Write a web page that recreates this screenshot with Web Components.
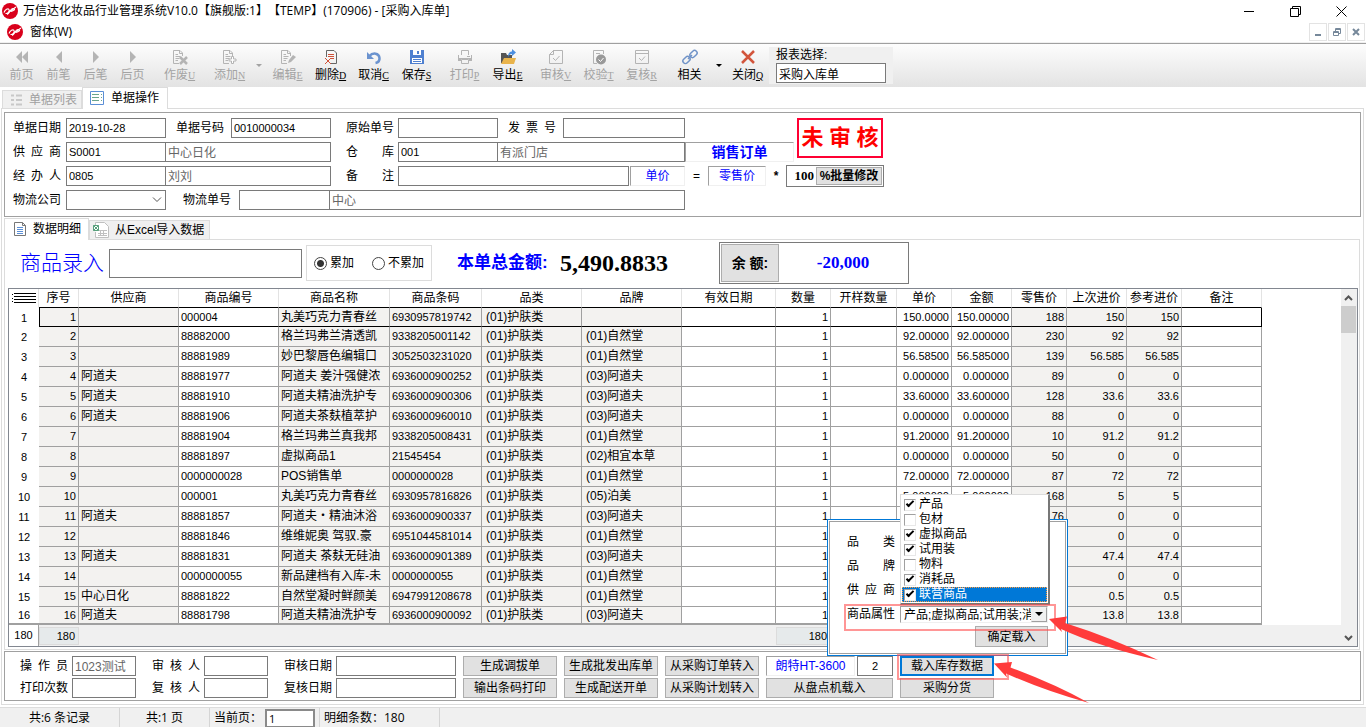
<!DOCTYPE html>
<html lang="zh-CN">
<head>
<meta charset="utf-8">
<title>万信达化妆品行业管理系统V10.0</title>
<style>
html { background: #fff; }
body { margin: 0; font: 12px/16px "Liberation Sans", "Noto Sans CJK SC", sans-serif; color: #000; text-spacing-trim: space-all; }
</style>
</head>
<body>
<app-window>
  <title-bar slot="chrome"></title-bar>
  <menu-bar slot="chrome"></menu-bar>
  <tool-bar slot="chrome"></tool-bar>
  <tab-strip slot="chrome"></tab-strip>
  <order-form></order-form>
  <detail-panel>
    <entry-bar></entry-bar>
    <data-grid></data-grid>
  </detail-panel>
  <action-panel></action-panel>
  <status-bar slot="status"></status-bar>
  <load-dialog slot="overlay"></load-dialog>
  <pointer-marks slot="overlay"></pointer-marks>
</app-window>

<script>
const BASE = `
  *, *::before, *::after { box-sizing: border-box; }
  :host { display: block; box-sizing: border-box; }
  input, button, select { font: inherit; color: inherit; margin: 0; border-radius: 0; min-width: 0; }
  button { cursor: default; padding: 0; white-space: nowrap; }
  label, span { white-space: nowrap; }
  .box { border: 1px solid #7a7a7a; background: #fff; height: 20px; padding: 0 2px; font-size: 11px; outline: 0; }
  .push { border: 1px solid #adadad; background: #e1e1e1; }
  .sunk { border: 1px solid; border-color: #a0a0a0 #f0f0f0 #f0f0f0 #a0a0a0; height: 20px; display: flex; align-items: center; justify-content: center; color: #00f; }
  .lab { width: 48px; text-align: justify; text-align-last: justify; flex: none; }
`;
function define(name, html) {
  customElements.define(name, class extends HTMLElement {
    constructor() {
      super();
      this.attachShadow({ mode: 'open' });
    }
    connectedCallback() {
      const source = typeof html === 'function' ? html(this) : html;
      const t = document.createElement('template');
      t.innerHTML = `<style>${BASE}</style>${source}`;
      this.shadowRoot.replaceChildren(t.content.cloneNode(true));
    }
  });
}

define('app-window', `
  <style>
    :host { position: relative; }
    main { margin: 0 2px 2px 1px; border: 1px solid #dcdcdc; padding: 3px 2px; background: #fff; }
  </style>
  <slot name="chrome"></slot>
  <main><slot></slot></main>
  <slot name="status"></slot>
  <slot name="overlay"></slot>
`);

define('brand-logo', `
  <style>:host { width: 16px; height: 16px; flex: none; } svg { display: block; }</style>
  <svg width="16" height="16" viewBox="0 0 16 16"><circle cx="8" cy="8" r="8" fill="#d9001b"/>
    <g fill="none" stroke="#fff" stroke-width="1.100"><path d="M2 9.500C3 6.500 6 5 7 6.500S5.500 11 3.500 10.500M5 11.500C7.500 11 8.500 5 11 5.500S12 8 9 8.500L13 6.500"/><path d="M7 9 14 4"/></g></svg>
`);

define('title-bar', `
  <style>
    :host { display: flex; align-items: center; height: 22px; padding: 0 2px; background: #fff; font-family: "Open Sans", "Noto Sans CJK SC", sans-serif; }
    span { margin-left: 5px; flex: 1; }
    button { width: 46px; height: 22px; border: 0; background: none; display: grid; place-items: center; }
    svg { fill: none; stroke: #000; }
  </style>
  <brand-logo></brand-logo>
  <span>万信达化妆品行业管理系统V10.0【旗舰版:1】【TEMP】(170906) - [采购入库单]</span>
  <button aria-label="最小化"><svg width="11" height="11"><path d="M0 5.500H10"/></svg></button>
  <button aria-label="还原"><svg width="11" height="11"><path d="M.5 2.500H8.500V10.500H.5ZM2.500 2.500V.5H10.500V8.500H8.500"/></svg></button>
  <button aria-label="关闭"><svg width="11" height="11"><path d="M.5.5 10.500 10.500M10.500.5.5 10.500"/></svg></button>
`);

define('menu-bar', `
  <style>
    :host { display: flex; align-items: center; height: 21px; padding: 0 1px 0 7px; background: #fff; border-bottom: 1px solid #f0f0f0; font-family: "Open Sans", "Noto Sans CJK SC", sans-serif; }
    a { margin: 0 auto 0 7px; color: inherit; text-decoration: none; }
    button { width: 18px; height: 18px; margin-left: 1px; border: 1px solid #e3e3e3; background: #fff; display: grid; place-items: center; }
    svg { fill: none; stroke: #76889a; stroke-width: 2; }
  </style>
  <brand-logo></brand-logo>
  <a href="#">窗体(W)</a>
  <button aria-label="最小化子窗体"><svg width="10" height="10"><path d="M2 8H8"/></svg></button>
  <button aria-label="还原子窗体"><svg width="10" height="10"><path stroke-width="1" d="M1.500 4.500H6.500V8.500H1.500ZM3.500 4V1.500H8.500V6.500H7M1 5.500H7M3 2.500H9"/></svg></button>
  <button aria-label="关闭子窗体"><svg width="10" height="10"><path d="M2 2 8 8M8 2 2 8"/></svg></button>
`);

const G = '#b4b4b4';
const sheet = c => `<path fill="none" stroke="${c}" d="M10.500 7V4L8 1.500H1.500V14.500H7M7.500 1.500V4.500H10.500M3.500 5.500H6M3.500 7.500H8.500M3.500 9.500H7.500M3.500 11.500H6"/>`;
const ICONS = {
  first: `<path fill="${G}" d="M8 2V14L2 8ZM14 2V14L8 8Z"/>`,
  prev: `<path fill="${G}" d="M11 2V14L5 8Z"/>`,
  next: `<path fill="${G}" d="M5 2V14L11 8Z"/>`,
  last: `<path fill="${G}" d="M5 2V14L11 8Z"/>`,
  voided: sheet(G) + `<path stroke="${G}" stroke-width="2.500" d="M8 8 15 15M15 8 8 15"/>`,
  add: sheet(G) + `<path fill="#fff" stroke="${G}" d="M9.500 7.500h2v2.500h2.500v2h-2.500v2.500h-2v-2.500h-2.500v-2h2.500Z"/>`,
  edit: sheet(G) + `<path fill="${G}" d="M13 6 16 8 11 13 8 14 9 11Z"/>`,
  del: `<path fill="none" stroke="#666" d="M3.500 8V1.500H11L13.500 4V14.500H8"/><path stroke="#d0533a" fill="none" d="M5 5.500H11M5 7.500H11M8 9.500H11M2 9 8 15M8 9 2 15"/>`,
  undo: `<path fill="none" stroke="#6b93cf" stroke-width="2.500" d="M3 7.500C7 3 13 4 13.500 9C13.700 11.500 12 13.500 9.500 14"/><path fill="#6b93cf" d="M1 3V10H8Z"/>`,
  save: `<path fill="#4f80d0" d="M1 1H15V15H1Z"/><path fill="#fff" d="M4 1H12V6H4ZM3 9H13V14H3Z"/><path fill="#4f80d0" d="M8 2H10V5H8ZM4 10H12V11H4ZM4 12H12V13H4Z"/>`,
  print: `<path fill="none" stroke="${G}" d="M4.500 6V1.500H11.500V6M4.500 10.500H11.500V14.500H4.500Z"/><path fill="${G}" d="M1 6H2V9H14V6H15V12H12V10H4V12H1ZM10 7V8H13V7Z"/>`,
  out: `<path fill="#555" d="M1 4H6L7 6H12V10L3 14H1Z"/><path fill="#e9b44c" d="M4 9H16L14 15H1Z"/><path fill="#4c8fe0" d="M8 8C8 4 10 2.500 12 2.500V0L16 3.500 12 7V5C10 5 9 6 8 8Z"/>`,
  audit: `<path fill="none" stroke="${G}" d="M5 1.500H14.500V14.500H1.500V5.500H5.500V1.500L1.500 5.500M5 9 7.500 11.500 11.500 7"/>`,
  verify: `<path fill="none" stroke="${G}" d="M12.500 5V1.500H2.500V14.500H6M5 4.500H9"/><circle cx="10" cy="10.500" r="5" fill="#999"/><path fill="none" stroke="#fff" d="M7.500 10.500 9.500 12.500 12.500 9"/>`,
  review: `<path fill="none" stroke="${G}" d="M1.500 1.500H14.500V14.500H1.500ZM1.500 4.500H14.500M5 9 7.500 11.500 11 7.500"/>`,
  link: `<g fill="none" stroke="#7093c8" stroke-width="1.500"><rect x="7.500" y="2.500" width="8" height="5" rx="2.500" transform="rotate(-45 11.500 5)"/><rect x=".5" y="8.500" width="8" height="5" rx="2.500" transform="rotate(-45 4.500 11)"/><path d="M6 10 10 6"/></g>`,
  close: `<path stroke="#d2553c" stroke-width="2.500" d="M2 2 14 14M14 2 2 14"/>`
};
define('tool-button', el => `
  <style>
    :host { width: ${el.hasAttribute('narrow') ? 37 : 43}px; flex: none; }
    :host([gap]) { margin-left: 5px; }
    :host([gap="wide"]) { margin-left: 7px; }
    button { display: flex; flex-direction: column; align-items: center; gap: 2px; width: 100%; border: 0; background: none; padding: 5px 0 0; }
    button:disabled { color: #a3a3a3; }
    svg { width: 16px; height: 16px; }
    u { font: 10px/16px "Liberation Serif", serif; }
  </style>
  <button ${el.hasAttribute('off') ? 'disabled' : ''}>
    <svg viewBox="0 0 16 16">${ICONS[el.getAttribute('icon')]}</svg>
    <span><slot></slot>${el.hasAttribute('key') ? `<u>${el.getAttribute('key')}</u>` : ''}</span>
  </button>
`);

define('tool-bar', `
  <style>
    :host { display: flex; height: 44px; border-top: 1px solid #a0a0a0; padding-left: 3px; background: linear-gradient(#fdfdfd, #e3e3e3); }
    i { width: 15px; flex: none; display: grid; place-items: center; }
    i::before { content: ""; border: 3px solid transparent; border-top-color: currentColor; border-bottom: 0; }
    .off { color: #a3a3a3; }
    .report { width: 124px; height: 37px; margin-top: 3px; padding-left: 7px; background: #f0f0f0; display: flex; flex-direction: column; }
    .report .box { width: 110px; font-size: 12px; }
  </style>
  <tool-button narrow off icon="first">前页</tool-button>
  <tool-button narrow off icon="prev">前笔</tool-button>
  <tool-button narrow off icon="next">后笔</tool-button>
  <tool-button narrow off icon="last">后页</tool-button>
  <tool-button gap="wide" off icon="voided" key="U">作废</tool-button>
  <tool-button gap="wide" off icon="add" key="N">添加</tool-button>
  <i class="off"></i>
  <tool-button off icon="edit" key="E">编辑</tool-button>
  <tool-button icon="del" key="D">删除</tool-button>
  <tool-button icon="undo" key="C">取消</tool-button>
  <tool-button icon="save" key="S">保存</tool-button>
  <tool-button gap off icon="print" key="P">打印</tool-button>
  <tool-button icon="out" key="E">导出</tool-button>
  <tool-button gap off icon="audit" key="V">审核</tool-button>
  <tool-button off icon="verify" key="T">校验</tool-button>
  <tool-button off icon="review" key="R">复核</tool-button>
  <tool-button gap icon="link">相关</tool-button>
  <i></i>
  <tool-button icon="close" key="Q">关闭</tool-button>
  <label class="report">报表选择:<input class="box" value="采购入库单"></label>
`);

define('tab-strip', `
  <style>
    :host { display: flex; align-items: flex-end; height: 21px; padding-left: 2px; background: #fff; }
    button { display: flex; align-items: center; border: 1px solid #dcdcdc; border-bottom: 0; background: #f0f0f0; height: 18px; width: 80px; padding-left: 7px; gap: 5px; color: #a0a0a0; }
    .on { position: relative; height: 22px; margin-bottom: -1px; width: 86px; background: #fff; color: #000; gap: 7px; padding-bottom: 2px; }
    svg { flex: none; }
  </style>
  <button role="tab"><svg width="14" height="12"><path stroke="#c8c8c8" stroke-width="2" d="M1 1.500H4M6 1.500H12M1 6H4M6 6H12M1 10.500H4M6 10.500H12"/></svg>单据列表</button>
  <button role="tab" class="on" aria-selected="true"><svg width="14" height="14"><path fill="#fff" stroke="#5b8fd6" d="M.5.5H13.500V13.500H.5Z"/><path stroke="#6aa58c" d="M2 3.500H9M2 6.500H9M2 9.500H9M11 3.500H12M11 6.500H12M11 9.500H12"/></svg>单据操作</button>
`);

define('form-field', el => {
  const a = n => el.getAttribute(n) || '';
  return `
  <style>
    :host { display: flex; align-items: center; flex: none; }
    label { margin-right: var(--label-gap, 4px); }
    .one { width: ${a('w')}px; }
    .two { width: ${+a('w2') + 1}px; margin-left: -1px; color: #666; }
    .two, .gray { color: #666; font-size: 12px; line-height: 16px; padding-bottom: 2px; }
  </style>
  <label class="lab" for="f">${a('label')}</label>
  <input id="f" class="box one ${el.hasAttribute('gray') ? 'gray' : ''}" value="${a('value')}">
  ${el.hasAttribute('w2') ? `<input class="box two" readonly aria-label="${a('label')}名称" value="${a('value2')}">` : ''}`;
});

define('order-form', `
  <style>
    :host { border: 1px solid #a0a0a0; padding: 5px 8px 6px; }
    form { display: flex; flex-direction: column; gap: 4px; }
    .row { display: flex; height: 20px; align-items: center; }
    form-field:first-child { --label-gap: 5px; }
    .g10 { margin-left: 10px; --label-gap: 7px; }
    .g15 { margin-left: 15px; }
    .g17 { margin-left: 17px; --label-gap: 8px; }
    .stamp { margin-left: 112px; width: 86px; height: 40px; align-self: flex-start; border: 2px solid #ff0033; color: #f00; font: 700 22px/36px "Liberation Serif", "Noto Sans CJK SC", serif; text-align: center; }
    .order { width: 109px; font-size: 14px; font-weight: 700; }
    .price { width: 55px; margin-left: 1px; }
    .retail { width: 58px; }
    .op { text-align: center; width: 23px; }
    .mul { width: 20px; font-weight: 700; }
    .combo { width: 100px; display: block; position: relative; margin-left: 5px; height: 20px; }
    .combo select { appearance: none; width: 100%; }
    .combo svg { position: absolute; right: 4px; top: 7px; fill: none; stroke: #555; pointer-events: none; }
    .batch { display: flex; border: 1px solid #7a7a7a; width: 98px; height: 22px; padding: 1px; flex: none; }
    .batch input { border: 0; width: 28px; padding: 0 2px 0 0; text-align: right; font-weight: 700; font-family: "Liberation Serif", serif; font-size: 13px; outline: 0; }
    .batch button { flex: 1; font-weight: 700; }
  </style>
  <form onsubmit="return false">
    <div class="row">
      <form-field label="单据日期" w="100" value="2019-10-28"></form-field>
      <form-field class="g10" label="单据号码" w="100" value="0010000034"></form-field>
      <form-field class="g15" label="原始单号" w="100"></form-field>
      <form-field class="g10" label="发 票 号" w="122"></form-field>
      <span class="stamp">未 审 核</span>
    </div>
    <div class="row">
      <form-field label="供 应 商" w="100" value="S0001" w2="165" value2="中心日化"></form-field>
      <form-field class="g15" label="仓 库" w="100" value="001" w2="187" value2="有派门店"></form-field>
      <span class="sunk order">销售订单</span>
    </div>
    <div class="row">
      <form-field label="经 办 人" w="100" value="0805" w2="165" value2="刘刘"></form-field>
      <form-field class="g15" label="备 注" w="231"></form-field>
      <span class="sunk price">单价</span><span class="op">=</span>
      <span class="sunk retail">零售价</span><span class="op mul">*</span>
      <div class="batch"><input aria-label="百分比" value="100"><button class="push">%批量修改</button></div>
    </div>
    <div class="row">
      <label class="lab" for="carrier">物流公司</label>
      <span class="combo"><select id="carrier" class="box"><option></option></select><svg width="10" height="6"><path d="M1 .5 5 4.500 9 .5"/></svg></span>
      <form-field class="g17" label="物流单号" w="91" w2="355" value2="中心"></form-field>
    </div>
  </form>
`);

define('detail-panel', `
  <style>
    :host { margin-right: 1px; }
    nav { display: flex; align-items: flex-end; height: 22px; }
    button { display: flex; align-items: center; border: 1px solid #dcdcdc; border-bottom: 0; background: #f0f0f0; height: 19px; width: 121px; padding-left: 3px; gap: 6px; }
    .on { position: relative; height: 22px; margin-bottom: -1px; width: 85px; background: #fff; padding: 0 0 2px 9px; gap: 6px; }
    svg { flex: none; fill: none; }
    section { border: 1px solid #dcdcdc; padding: 0 1px 2px 3px; margin-bottom: 1px; }
  </style>
  <nav>
    <button role="tab" class="on" aria-selected="true"><svg width="13" height="14"><path stroke="#777" d="M.5.5H8.500L11.500 3.500V13.500H.5ZM8.500.5V3.500H11.500"/><path stroke="#5b8fd6" d="M3 5.500H9M3 7.500H9M3 9.500H9M3 11.500H9"/></svg>数据明细</button>
    <button role="tab"><svg width="16" height="16"><path fill="#fff" stroke="#c0c0c0" d="M2.500 6V.5H11.500L15.500 4.500V15.500H2.500V10"/><path stroke="#c0c0c0" d="M5 8.500H14M5 11.500H14M5 13.500H14M7.500 8V14M10.500 8V14"/><path fill="#fff" stroke="#58a07c" d="M.5 3.500H5.500V8.500H.5ZM.5 3.500 5.500 8.500M5.500 3.500.5 8.500"/></svg>从Excel导入数据</button>
  </nav>
  <section><slot></slot></section>
`);

define('entry-bar', `
  <style>
    :host { display: flex; align-items: center; height: 48px; padding: 0 0 2px 12px; }
    .cap { font-size: 21px; line-height: 24px; color: #00f; width: 89px; font-weight: 300; }
    .entry { width: 193px; height: 29px; font-size: 14px; }
    fieldset { margin: 0 0 0 4px; border: 1px solid #dcdcdc; width: 126px; height: 36px; padding: 0 0 0 7px; display: flex; align-items: center; gap: 18px; }
    fieldset label { display: flex; align-items: center; gap: 3px; }
    input[type=radio] { appearance: none; width: 13px; height: 13px; border: 1px solid #444; border-radius: 50%; background: #fff; }
    input[type=radio]:checked { background: radial-gradient(#333 0 3px, #fff 4px); }
    .total { margin-left: 25px; width: 103px; color: #00f; font-size: 17px; font-weight: 700; }
    .sum { width: 159px; font: 700 24px/24px "Liberation Serif", serif; }
    .balance { display: flex; align-items: center; border: 1px solid #7a7a7a; padding: 1px; width: 190px; height: 42px; }
    .balance button { width: 58px; height: 38px; font-size: 14px; font-weight: 700; }
    .balance output { flex: 1; text-align: center; color: #00f; font: 700 17px/20px "Liberation Serif", serif; }
  </style>
  <label class="cap" for="entry">商品录入</label><input id="entry" class="box entry">
  <fieldset>
    <label><input type="radio" name="mode" checked>累加</label>
    <label><input type="radio" name="mode">不累加</label>
  </fieldset>
  <span class="total">本单总金额:</span><span class="sum">5,490.8833</span>
  <div class="balance"><button class="push">余 额:</button><output>-20,000</output></div>
`);

const COLUMNS = [
  ['序号', 40, 'g n'], ['供应商', 100, 'g'], ['商品编号', 100, 'd'], ['商品名称', 111, 'g'], ['商品条码', 92, 'g d'],
  ['品类', 100, 'g t'], ['品牌', 100, 'g t'], ['有效日期', 94, ''], ['数量', 55, 'n'], ['开样数量', 66, ''], ['单价', 55, 'n'],
  ['金额', 60, 'n'], ['零售价', 55, 'g n'], ['上次进价', 60, 'g n'], ['参考进价', 55, 'g n'], ['备注', 80, '']
];
const RECORDS = `|000004|丸美巧克力青春丝|6930957819742||150.0000|150.00000|188|150|150
|88882000|格兰玛弗兰清透凯|9338205001142|(01)自然堂|92.00000|92.000000|230|92|92
|88881989|妙巴黎唇色编辑口|3052503231020|(01)自然堂|56.58500|56.585000|139|56.585|56.585
阿道夫|88881977|阿道夫 姜汁强健浓|6936000900252|(03)阿道夫|0.000000|0.000000|89|0|0
阿道夫|88881910|阿道夫精油洗护专|6936000900306|(03)阿道夫|33.60000|33.600000|128|33.6|33.6
阿道夫|88881906|阿道夫茶麸植萃护|6936000960010|(03)阿道夫|0.000000|0.000000|88|0|0
|88881904|格兰玛弗兰真我邦|9338205008431|(01)自然堂|91.20000|91.200000|10|91.2|91.2
|88881897|虚拟商品1|21545454|(02)相宜本草|0.000000|0.000000|50|0|0
|0000000028|POS销售单|0000000028|(01)自然堂|72.00000|72.000000|87|72|72
|000001|丸美巧克力青春丝|6930957816826|(05)泊美|5.000000|5.000000|168|5|5
阿道夫|88881857|阿道夫・精油沐浴|6936000900337|(03)阿道夫|||76|0|0
|88881846|维维妮奥 驾驭.豪|6951044581014|(01)自然堂||||0|0
阿道夫|88881831|阿道夫 茶麸无硅油|6936000901389|(03)阿道夫||||47.4|47.4
|0000000055|新品建档有入库-未|0000000055|(01)自然堂||||0|0
中心日化|88881822|自然堂凝时鲜颜美|6947991208678|(01)自然堂||||0.5|0.5
阿道夫|88881798|阿道夫精油洗护专|6936000900092|(03)阿道夫||||13.8|13.8`.split('\n').map(l => l.split('|'));

define('data-grid', () => {
  const rows = RECORDS.map((r, i) => {
    const [sup, code, name, bar, brand, price, amount, retail, last, ref] = r;
    const cells = [i + 1, sup, code, name, bar, '(01)护肤类', brand, '', 1, '', price, amount, retail, last, ref, ''];
    return `<tr><th scope="row">${i + 1}</th>${cells.map((c, k) => `<td class="${COLUMNS[k][2]}">${c}</td>`).join('')}<td class="fill"></td></tr>`;
  }).join('');
  return `
  <style>
    :host { display: flex; border: 1px solid #828790; background: #fff; }
    .view { flex: 1; min-width: 0; overflow: hidden; }
    table { table-layout: fixed; width: 100%; min-width: 1253px; border-collapse: separate; border-spacing: 0; line-height: 16px; }
    th, td { padding: 0; font-weight: 400; white-space: nowrap; overflow: hidden; border: 0 solid #a0a0a0; height: 20px; }
    thead th { height: 19px; text-align: center; border-width: 0 1px 1px 0; border-color: #e3e3e3; border-bottom-color: #000; }
    thead th:first-child { border-bottom-color: #fff; }
    thead th.fill { border-color: #fff; }
    thead svg { display: block; margin: 0 auto; }
    tbody th { font-size: 11px; text-align: center; }
    td { border-width: 0 1px 1px 0; padding: 0 2px 1px; }
    .g { background: #f3f2f0; }
    .t { padding-left: 4px; }
    .n, .d { font-size: 11px; }
    .n { text-align: right; }
    tbody tr:first-child > * { height: 19px; }
    tbody tr:first-child td { border-bottom-color: #000; }
    tbody tr:first-child td:nth-child(17) { border-right-color: #000; }
    tbody tr:first-child td:nth-child(2) { border-left: 1px solid #000; }
    tbody tr:last-child > * { height: 18px; line-height: 15px; border-bottom: 2px solid #a0a0a0; padding-bottom: 0; }
    tbody tr td.fill { border-width: 0; }
    tfoot td, tfoot th { height: 21px; border: 0; background: #f0f0f0; font-size: 11px; }
    tfoot th { background: #fff; border-right: 1px solid #a0a0a0; padding-bottom: 2px; }
    tfoot span { display: block; height: 18px; padding-right: 3px; border: 1px solid #dcdcdc; background: #e6eaeb; text-align: right; }
    tfoot td { padding: 1px 0; }
    .bar { width: 16px; padding-right: 1px; display: flex; flex-direction: column; align-items: center; background: #f0f0f0; }
    .bar i { width: 15px; height: 27px; background: #cdcdcd; margin-bottom: auto; }
    .bar svg { fill: none; stroke: #555; stroke-width: 2; flex: none; margin: 6px 0 5px; }
  </style>
  <div class="view"><table>
    <colgroup><col style="width:30px">${COLUMNS.map(c => `<col style="width:${c[1]}px">`).join('')}<col></colgroup>
    <thead><tr><th aria-label="行"><svg width="24" height="10"><path stroke="#000" d="M2 .5H24M2 3.500H24M2 6.500H24M2 9.500H24M0 1.500H1M0 5.500H1M0 8.500H1"/></svg></th>${COLUMNS.map(c => `<th scope="col">${c[0]}</th>`).join('')}<th class="fill"></th></tr></thead>
    <tbody>${rows}</tbody>
    <tfoot><tr><th>180</th>${COLUMNS.map((c, k) => `<td>${k === 0 || k === 8 ? '<span>180</span>' : ''}</td>`).join('')}<td class="fill"></td></tr></tfoot>
  </table></div>
  <div class="bar"><svg width="9" height="6"><path d="M1 5 4.500 1.500 8 5"/></svg><i></i><svg width="9" height="6"><path d="M1 1 4.500 4.500 8 1"/></svg></div>`;
});

define('action-panel', `
  <style>
    :host { display: flex; border: 1px solid #a0a0a0; padding: 4px 15px 2px; gap: 7px; }
    .col { display: grid; grid-template-rows: 20px 20px; gap: 2px; flex: none; }
    .fields { margin-right: 9px; }
    .fields.end { margin-right: 0; }
    .push { width: 94px; }
    .wide { width: 127px; }
    .pair { display: flex; gap: 2px; }
    .model { width: 89px; }
    .qty { width: 36px; text-align: center; }
    .focus { border: 2px solid #0078d7; }
  </style>
  <div class="col fields"><form-field label="操 作 员" w="64" gray value="1023测试"></form-field><form-field label="打印次数" w="64"></form-field></div>
  <div class="col fields"><form-field label="审 核 人" w="64"></form-field><form-field label="复 核 人" w="64"></form-field></div>
  <div class="col fields end"><form-field label="审核日期" w="120"></form-field><form-field label="复核日期" w="120"></form-field></div>
  <div class="col"><button class="push">生成调拔单</button><button class="push">输出条码打印</button></div>
  <div class="col"><button class="push">生成批发出库单</button><button class="push">生成配送开单</button></div>
  <div class="col"><button class="push">从采购订单转入</button><button class="push">从采购计划转入</button></div>
  <div class="col"><div class="pair"><span class="sunk model">朗特HT-3600</span><input class="box qty" aria-label="端口" value="2"></div><button class="push wide">从盘点机载入</button></div>
  <div class="col"><button class="push focus">载入库存数据</button><button class="push">采购分货</button></div>
`);

define('status-bar', `
  <style>
    :host { display: flex; align-items: stretch; height: 21px; background: #f0f0f0; border-top: 1px solid #dcdcdc; font-family: "Open Sans", "Noto Sans CJK SC", sans-serif; line-height: 20px; }
    div { border-right: 1px solid #d5d5d5; flex: none; white-space: nowrap; }
    .a { width: 120px; text-align: center; }
    .b { width: 90px; text-align: center; }
    .c { width: 110px; padding-left: 4px; }
    .c label { display: flex; }
    .c input { margin: 1px 4px 0 auto; width: 50px; height: 19px; border: 2px solid #8a8a8a; }
    .d { width: 120px; padding-left: 4px; }
  </style>
  <div class="a">共:6 条记录</div><div class="b">共:1 页</div>
  <div class="c"><label>当前页：<input class="box" value="1"></label></div>
  <div class="d">明细条数：180</div>
`);

define('load-dialog', `
  <style>
    :host { position: absolute; left: 827px; top: 519px; width: 241px; border: 1px solid #0078d7; padding: 1px; background: #fff; }
    .in { border: 1px solid #a0a0a0; padding: 8px 17px 6px; display: flex; flex-direction: column; }
    .row { display: flex; align-items: center; height: 24px; }
    .combo { display: flex; margin-left: 5px; width: 148px; height: 17px; border: 1px solid; border-color: #a0a0a0 #f0f0f0 #f0f0f0 #a0a0a0; }
    select { appearance: none; flex: 1; border: 0; background: #fff; padding: 0 0 0 3px; outline: 0; }
    .drop { width: 16px; border: 1px solid; border-color: #f0f0f0 #a0a0a0 #a0a0a0 #f0f0f0; background: #f0f0f0; display: grid; place-items: center; }
    .drop::before { content: ""; border: 4px solid transparent; border-top-color: #000; border-bottom: 0; }
    .push { align-self: flex-end; width: 73px; height: 21px; }
    ul { position: absolute; left: 72px; top: -26px; width: 150px; margin: 0; padding: 2px 1px 1px; list-style: none; background: #fff; border: 1px solid #dcdcdc; border-right: 2px solid #777; border-bottom: 2px solid #777; }
    li label { display: flex; align-items: center; height: 15px; gap: 3px; padding-left: 1px; line-height: 15px; border: 1px solid transparent; }
    .hot { background: #0078d7; color: #fff; border: 1px dotted #ff9a3c; }
    li input { appearance: none; width: 12px; height: 12px; background: #fff; border: 1px solid; border-color: #a0a0a0 #e8e8e8 #e8e8e8 #a0a0a0; display: grid; place-items: center; flex: none; }
    li input:checked::before { content: ""; width: 8px; height: 4px; border: solid #000; border-width: 0 0 2px 2px; transform: rotate(-45deg); margin-top: -3px; }
  </style>
  <div class="in">
    <div class="row"><span class="lab">品 类</span></div>
    <div class="row"><span class="lab">品 牌</span></div>
    <div class="row"><span class="lab">供 应 商</span></div>
    <div class="row"><label class="lab" for="kind">商品属性</label>
      <div class="combo"><select id="kind"><option>产品;虚拟商品;试用装;消耗品;联营商品</option></select><button class="drop" aria-label="展开"></button></div></div>
    <button class="push">确定载入</button>
  </div>
  <ul>
    <li><label><input type="checkbox" checked>产品</label></li>
    <li><label><input type="checkbox">包材</label></li>
    <li><label><input type="checkbox" checked>虚拟商品</label></li>
    <li><label><input type="checkbox" checked>试用装</label></li>
    <li><label><input type="checkbox">物料</label></li>
    <li><label><input type="checkbox" checked>消耗品</label></li>
    <li><label class="hot"><input type="checkbox" checked>联营商品</label></li>
  </ul>
`);

define('pointer-marks', `
  <style>:host { position: absolute; left: 840px; top: 600px; pointer-events: none; } svg { display: block; }</style>
  <svg width="330" height="110" viewBox="840 600 330 110">
    <g fill="none" stroke="#ff5050" stroke-opacity=".6" stroke-width="2"><path d="M845 605H1055V630H845ZM898 655H1008V679H898Z"/></g>
    <g fill="#ff3b3b"><path d="M1049 619 1067 616.500 1065 623Q1110 637 1158 660Q1100 647 1061 629L1062 632Z"/><path d="M994 663.500 1012 662 1010.500 667.500Q1055 684 1089 703Q1045 691 1006 673.500L1007 677.500Z"/></g>
  </svg>
`);
</script>
</body>
</html>
